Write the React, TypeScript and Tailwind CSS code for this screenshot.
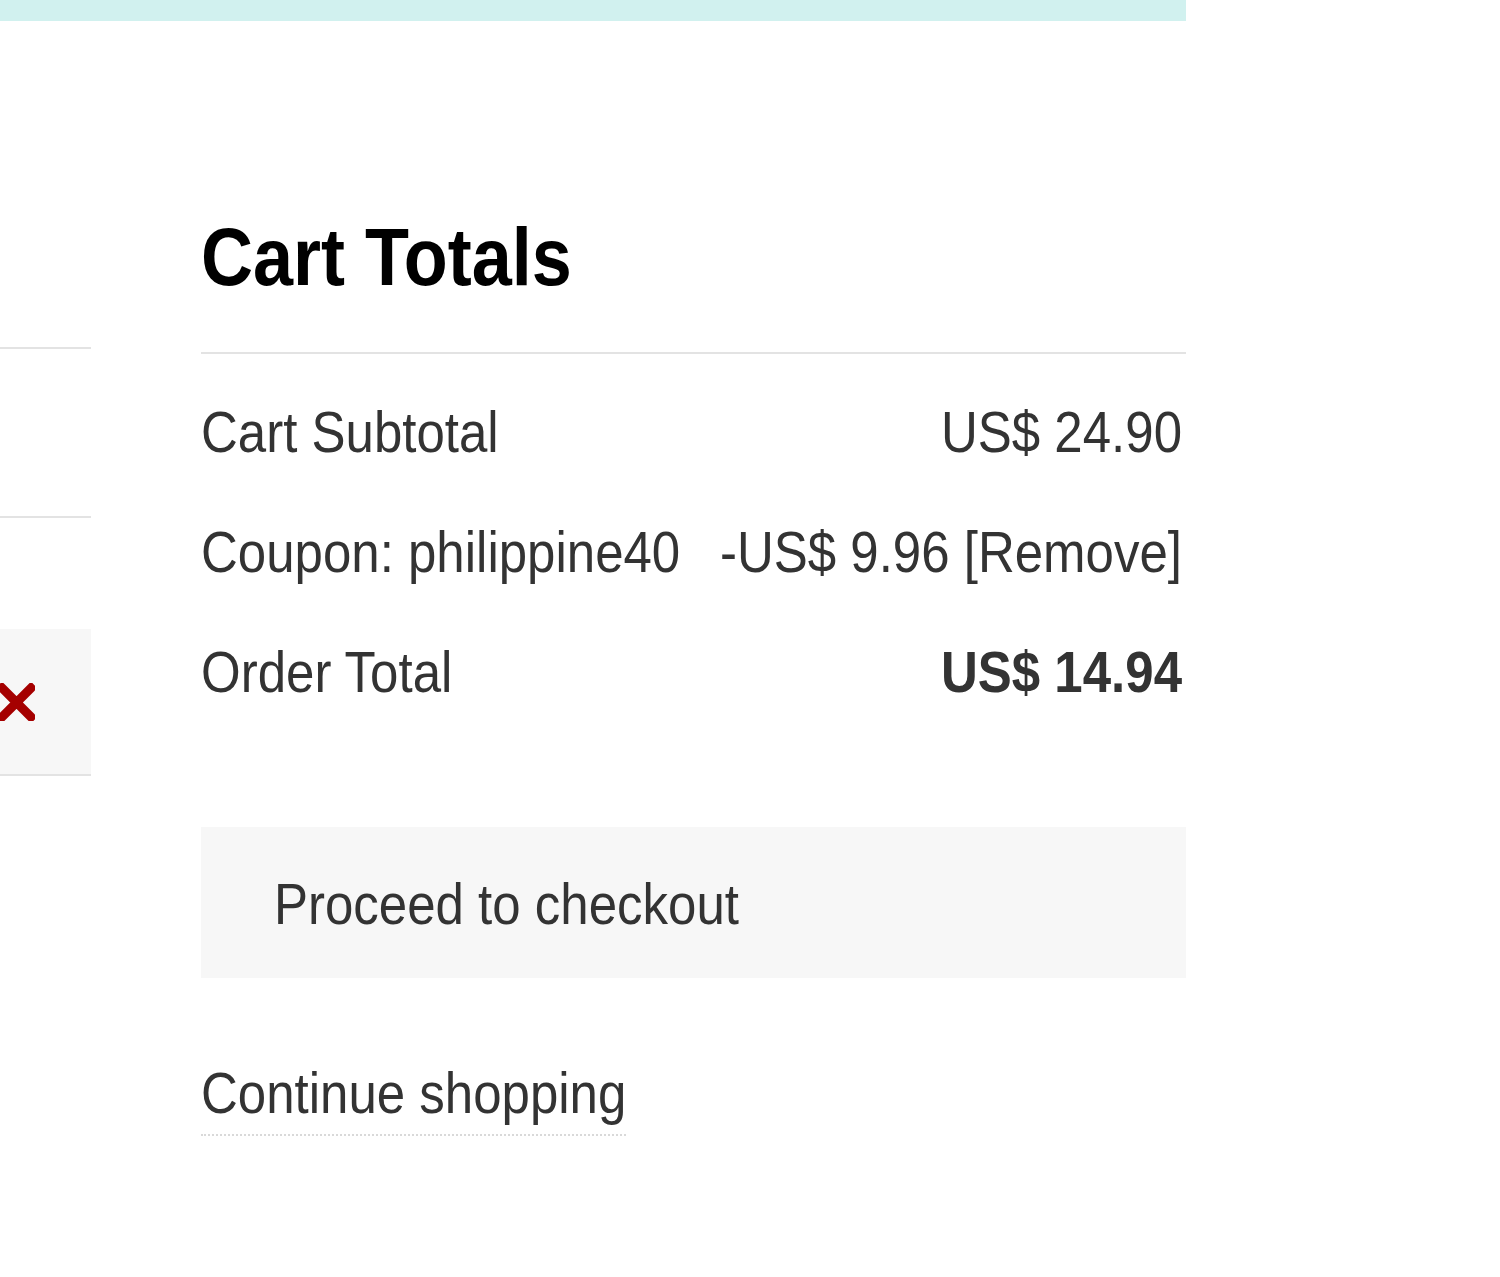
import React from "react";

const font = { fontFamily: '"Liberation Sans", Arial, Helvetica, sans-serif' };

function T({ children, className = "" }: { children: React.ReactNode; className?: string }) {
  return <span className={"inline-block origin-center scale-y-[1.14] " + className}>{children}</span>;
}

function Row({ label, value, bold }: { label: string; value: React.ReactNode; bold?: boolean }) {
  return (
    <div className="flex h-[120px] items-center justify-between pr-[4px]">
      <T className="leading-none">{label}</T>
      <T className={bold ? "leading-none font-bold" : "leading-none"}>{value}</T>
    </div>
  );
}

export default function App() {
  return (
    <div className="min-h-[1277px] w-[1500px] bg-white text-[#333333]" style={font}>
      <div className="h-[21px] w-[1186px] bg-[#d1f1ef]" />
      <div className="flex">
        <div className="w-[91px] shrink-0 pt-[326px]">
          <div className="h-[171px] border-t-2 border-b-2 border-[#e3e3e3]" />
          <div className="mt-[111px] flex h-[147px] items-center border-b-2 border-[#e3e3e3] bg-[#f7f7f7]">
            <svg width="44" height="38" viewBox="0 0 44 38" className="ml-[-9px]">
              <path d="M11 5 L40 34 M40 5 L11 34" stroke="#a50000" strokeWidth="9" strokeLinecap="square" />
            </svg>
          </div>
        </div>
        <div className="ml-[110px] w-[985px] shrink-0 pt-[200px]">
          <h2 className="text-[72px] font-bold leading-none text-black">
            <T>Cart Totals</T>
          </h2>
          <div className="mt-[59px] border-t-2 border-[#e3e3e3]" />
          <div className="mt-[18px] text-[51px]">
            <Row label="Cart Subtotal" value="US$ 24.90" />
            <Row label="Coupon: philippine40" value={<>-US$ 9.96 <span>[Remove]</span></>} />
            <Row label="Order Total" value="US$ 14.94" bold />
          </div>
          <button className="mt-[95px] block h-[151px] w-full bg-[#f7f7f7] pl-[73px] pt-[4px] text-left text-[51px] leading-none text-[#333333]">
            <T>Proceed to checkout</T>
          </button>
          <div className="mt-[90px]">
            <a className="inline-block border-b-2 border-dotted border-[#d9d9d9] pb-[15px] text-[51px] leading-none text-[#333333]">
              <T>Continue shopping</T>
            </a>
          </div>
        </div>
      </div>
    </div>
  );
}
